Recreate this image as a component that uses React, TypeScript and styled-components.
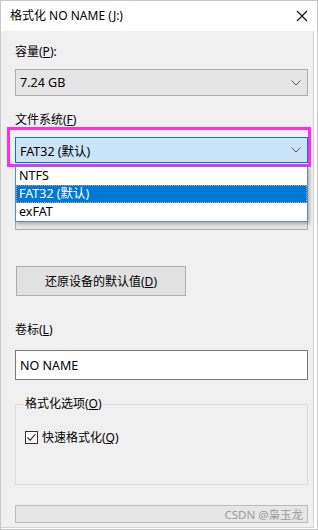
import styled, { createGlobalStyle } from 'styled-components';

const GlobalStyle = createGlobalStyle`
  html, body {
    margin: 0;
    padding: 0;
    background: #ffffff;
  }
  body {
    font-family: "Noto Sans", "Noto Sans CJK SC", sans-serif;
    font-size: 12px;
    color: #000000;
  }
`;

const Window = styled.div`
  width: 318px;
  height: 530px;
  box-sizing: border-box;
  border: 1px solid #c8c8c8;
  background: #ffffff;
  display: flex;
  flex-direction: column;
  overflow: hidden;
`;

const TitleBar = styled.div`
  height: 30px;
  flex: none;
  display: flex;
  align-items: center;
  justify-content: space-between;
  padding: 0 9px 0 9px;
`;

const Title = styled.span`
  font-size: 12px;
  line-height: 16px;
  color: #000000;
`;

const Body = styled.div`
  flex: 1;
  margin-right: 3px;
  margin-bottom: 1px;
  background: #f0f0f0;
  border-right: 1px solid #d4d4d4;
  border-bottom: 1px solid #d4d4d4;
  padding: 13px 5px 0 14px;
  display: flex;
  flex-direction: column;
`;

const Label = styled.div<{ $mt?: number }>`
  line-height: 16px;
  min-height: 16px;
  margin-top: ${(p) => p.$mt ?? 0}px;
`;

const Combo = styled.div<{ $mt?: number; $focus?: boolean }>`
  position: relative;
  height: ${(p) => (p.$focus ? 26 : 27)}px;
  box-sizing: border-box;
  margin-top: ${(p) => p.$mt ?? 0}px;
  background: ${(p) => (p.$focus ? '#cce4f7' : '#e5e5e5')};
  border: 1px solid ${(p) => (p.$focus ? '#0078d7' : '#adadad')};
  display: flex;
  align-items: center;
  justify-content: space-between;
  padding: 0 6px 0 4px;
  font-size: 12.5px;
`;

const Highlight = styled.div`
  position: absolute;
  left: -9px;
  top: -11px;
  right: -4px;
  bottom: -5px;
  border: 3px solid #ff2bf0;
  pointer-events: none;
`;

const List = styled.div`
  position: absolute;
  left: -1px;
  right: -1px;
  top: 28px;
  z-index: 2;
  background: #ffffff;
  border: 1px solid #4c8ed1;
  box-shadow: 2px 2px 3px rgba(0, 0, 0, 0.25);
  display: flex;
  flex-direction: column;
  padding: 0;
`;

const Item = styled.div<{ $sel?: boolean }>`
  height: 18px;
  box-sizing: border-box;
  line-height: 16px;
  padding: 0 2px;
  font-size: 12.5px;
  background: ${(p) => (p.$sel ? '#0078d7' : '#ffffff')};
  color: ${(p) => (p.$sel ? '#ffffff' : '#000000')};
  border: 1px ${(p) => (p.$sel ? 'dotted #e8a050' : 'solid transparent')};
`;

const Button = styled.div`
  width: 170px;
  height: 30px;
  box-sizing: border-box;
  margin-top: 36px;
  margin-left: 1px;
  background: #e1e1e1;
  border: 1px solid #adadad;
  display: flex;
  align-items: center;
  justify-content: center;
`;

const TextBox = styled.div`
  height: 30px;
  box-sizing: border-box;
  margin-top: 12px;
  background: #ffffff;
  border: 1px solid #7a7a7a;
  display: flex;
  align-items: center;
  padding: 0 4px;
  font-size: 12.5px;
`;

const Group = styled.fieldset`
  margin: 16px 0 0 0;
  height: 89px;
  box-sizing: border-box;
  border: 1px solid #dcdcdc;
  padding: 6px 9px 0 9px;
`;

const Legend = styled.legend`
  padding: 0 1px;
  margin-left: -1px;
  line-height: 16px;
`;

const CheckRow = styled.div`
  display: flex;
  align-items: center;
  gap: 4px;
  margin-top: 10px;
`;

const Box = styled.div`
  width: 13px;
  height: 13px;
  box-sizing: border-box;
  border: 1px solid #333333;
  background: #ffffff;
  display: flex;
  align-items: center;
  justify-content: center;
`;

const Progress = styled.div`
  height: 18px;
  box-sizing: border-box;
  margin-top: 20px;
  background: #e6e6e6;
  border: 1px solid #bcbcbc;
  display: flex;
  align-items: center;
  justify-content: flex-end;
  padding-right: 4px;
  color: #9a9a9a;
  font-size: 11.5px;
`;

const U = styled.span`
  text-decoration: underline;
`;

const Chevron = () => (
  <svg width="10" height="6" viewBox="0 0 10 6">
    <path d="M0.5 0.5 L5 5 L9.5 0.5" fill="none" stroke="#5a5a5a" strokeWidth="1" />
  </svg>
);

const Close = () => (
  <svg width="12" height="12" viewBox="0 0 12 12">
    <path d="M1 1 L11 11 M11 1 L1 11" stroke="#111" strokeWidth="1.1" />
  </svg>
);

export default function App() {
  return (
    <>
      <GlobalStyle />
      <Window>
        <TitleBar>
          <Title>格式化 NO NAME (J:)</Title>
          <Close />
        </TitleBar>
        <Body>
          <Label>
            容量(<U>P</U>):
          </Label>
          <Combo $mt={9}>
            <span>7.24 GB</span>
            <Chevron />
          </Combo>
          <Label $mt={16}>
            文件系统(<U>F</U>)
          </Label>
          <Combo $mt={9} $focus>
            <span>FAT32 (默认)</span>
            <Chevron />
            <Highlight />
            <List>
              <Item>NTFS</Item>
              <Item $sel>FAT32 (默认)</Item>
              <Item>exFAT</Item>
            </List>
          </Combo>
          {/* allocation unit row, covered by the open list */}
          <Label $mt={19} />
          <Combo $mt={5}>
            <span />
            <Chevron />
          </Combo>
          <Button>
            <span>
              还原设备的默认值(<U>D</U>)
            </span>
          </Button>
          <Label $mt={26}>
            卷标(<U>L</U>)
          </Label>
          <TextBox>NO NAME</TextBox>
          <Group>
            <Legend>
              格式化选项(<U>O</U>)
            </Legend>
            <CheckRow>
              <Box>
                <svg width="11" height="11" viewBox="0 0 11 11">
                  <path d="M1.5 5.5 L4.2 8.2 L9.5 2" fill="none" stroke="#222" strokeWidth="1.1" />
                </svg>
              </Box>
              <span>
                快速格式化(<U>Q</U>)
              </span>
            </CheckRow>
          </Group>
          <Progress>CSDN @枭玉龙</Progress>
        </Body>
      </Window>
    </>
  );
}
